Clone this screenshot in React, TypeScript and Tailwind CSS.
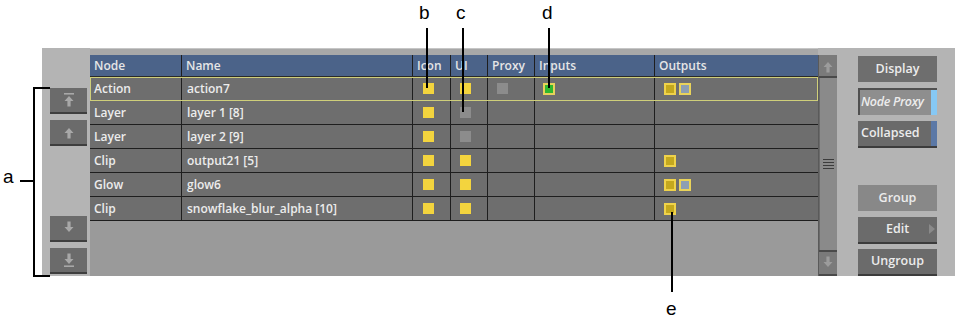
import React from "react";

const F = { fontFamily: '"Liberation Sans", Arial, sans-serif' };
const UIF = { fontFamily: '"Open Sans", "Liberation Sans", sans-serif' };

type Row = {
  node: string;
  name: string;
  icon: boolean;
  ui: "y" | "g";
  proxy?: boolean;
  input?: boolean;
  outputs: ("o" | "b")[];
  sel?: boolean;
};

const rows: Row[] = [
  { node: "Action", name: "action7", icon: true, ui: "y", proxy: true, input: true, outputs: ["o", "b"], sel: true },
  { node: "Layer", name: "layer 1 [8]", icon: true, ui: "g", outputs: [] },
  { node: "Layer", name: "layer 2 [9]", icon: true, ui: "g", outputs: [] },
  { node: "Clip", name: "output21 [5]", icon: true, ui: "y", outputs: ["o"] },
  { node: "Glow", name: "glow6", icon: true, ui: "y", outputs: ["o", "b"] },
  { node: "Clip", name: "snowflake_blur_alpha [10]", icon: true, ui: "y", outputs: ["o"] },
];

const Yel = () => <div className="w-[11px] h-[11px] bg-[#f3d43e]" />;
const Gry = () => <div className="w-[11px] h-[11px] bg-[#8c8c8c]" />;
const Out = ({ k }: { k: "o" | "b" }) =>
  k === "o" ? (
    <div className="w-[12px] h-[12px] bg-[#c4a81e] border-2 border-[#efd24a]" />
  ) : (
    <div className="w-[12px] h-[12px] bg-[#8d9fb2] border-2 border-[#e9d35a]" />
  );

const cols = [
  { w: "w-[92px]", label: "Node" },
  { w: "w-[231px]", label: "Name" },
  { w: "w-[38px]", label: "Icon" },
  { w: "w-[37px]", label: "UI" },
  { w: "w-[47px]", label: "Proxy" },
  { w: "w-[120px]", label: "Inputs" },
];

function Arrow({ dir, bar, c = "#a8a8a8" }: { dir: "up" | "down"; bar?: boolean; c?: string }) {
  return (
    <svg width="12" height="16" viewBox="0 0 12 16">
      {dir === "up" ? (
        <g fill={c}>
          {bar && <rect x="1" y="1" width="10" height="1.6" />}
          <polygon points="6,4 10.5,9 7.6,9 7.6,14.5 4.4,14.5 4.4,9 1.5,9" />
        </g>
      ) : (
        <g fill={c}>
          <polygon points="6,12 10.5,7 7.6,7 7.6,1.5 4.4,1.5 4.4,7 1.5,7" />
          {bar && <rect x="1" y="13.4" width="10" height="1.6" />}
        </g>
      )}
    </svg>
  );
}

function LeftBtn({ dir, bar }: { dir: "up" | "down"; bar?: boolean }) {
  return (
    <div className="w-[37px] h-[26px] bg-[#6b6b6b] border-b-2 border-[#3e3e3e] flex items-center justify-center">
      <Arrow dir={dir} bar={bar} />
    </div>
  );
}

function RBtn({
  children,
  className = "",
}: {
  children: React.ReactNode;
  className?: string;
}) {
  return (
    <div
      style={UIF}
      className={
        "w-[79px] h-[26px] flex items-center text-[12.5px] font-semibold text-[#ececec] " + className
      }
    >
      {children}
    </div>
  );
}

export default function App() {
  return (
    <div className="relative w-[959px] h-[321px] bg-white overflow-hidden" style={F}>
      {/* panel */}
      <div className="absolute left-[42px] top-[48px] w-[913px] h-[228px] bg-[#b4b4b4] flex">
        {/* left column */}
        <div className="w-[48px] pl-[8px] pt-[40px] flex flex-col">
          <LeftBtn dir="up" bar />
          <div className="h-[6px]" />
          <LeftBtn dir="up" />
          <div className="h-[70px]" />
          <LeftBtn dir="down" />
          <div className="h-[6px]" />
          <LeftBtn dir="down" bar />
        </div>
        {/* table */}
        <div className="w-[728px] flex flex-col" style={UIF}>
          <div className="h-[7px] bg-[#a8a8a8] border-t border-[#c6c6c6]" />
          <div className="flex-1 bg-[#9a9a9a] flex flex-col">
            {/* header */}
            <div className="flex h-[22px] bg-[#4b6389] border-b border-[#2a2a2a] text-[12px] font-semibold text-[#e6e6e6]">
              {cols.map((c, i) => (
                <div
                  key={i}
                  className={c.w + " h-full flex items-center pl-[4px] border-r border-[#1e1e1e] shrink-0"}
                >
                  {c.label}
                </div>
              ))}
              <div className="flex-1 h-full flex items-center pl-[4px]">Outputs</div>
            </div>
            {rows.map((r, ri) => (
              <div
                key={ri}
                className={
                  "flex h-[24px] bg-[#6e6e6e] text-[12px] font-semibold text-[#ececec] border-b border-[#1e1e1e] " +
                  (r.sel ? "outline outline-1 outline-[#cfcf7a] -outline-offset-1" : "")
                }
              >
                <div className="w-[92px] flex items-center pl-[4px] border-r border-[#1e1e1e] shrink-0">
                  {r.node}
                </div>
                <div className="w-[231px] flex items-center pl-[5px] border-r border-[#1e1e1e] shrink-0">
                  {r.name}
                </div>
                <div className="w-[38px] flex items-center pl-[10px] border-r border-[#1e1e1e] shrink-0">
                  {r.icon && <Yel />}
                </div>
                <div className="w-[37px] flex items-center pl-[9px] border-r border-[#1e1e1e] shrink-0">
                  {r.ui === "y" ? <Yel /> : <Gry />}
                </div>
                <div className="w-[47px] flex items-center pl-[9px] border-r border-[#1e1e1e] shrink-0">
                  {r.proxy && <Gry />}
                </div>
                <div className="w-[120px] flex items-center pl-[8px] border-r border-[#1e1e1e] shrink-0">
                  {r.input && (
                    <div className="w-[12px] h-[12px] bg-[#2fb82f] border-2 border-[#e6d25a]" />
                  )}
                </div>
                <div className="flex-1 flex items-center pl-[9px] gap-[3px]">
                  {r.outputs.map((o, oi) => (
                    <Out key={oi} k={o} />
                  ))}
                </div>
              </div>
            ))}
          </div>
        </div>
        {/* scrollbar */}
        <div className="w-[19px] flex flex-col pt-[7px]">
          <div className="flex-1 bg-[#8a8a8a] flex flex-col border-l border-[#5a5a5a]">
            <div className="h-[23px] bg-[#7a7a7a] border-b-2 border-[#4a4a4a] flex items-center justify-center">
              <Arrow dir="up" c="#9c9c9c" />
            </div>
            <div className="flex-1 flex items-center justify-center border-l border-[#6a6a6a]">
              <div className="flex flex-col gap-[2px]">
                <div className="w-[11px] h-px bg-[#3c3c3c]" />
                <div className="w-[11px] h-px bg-[#3c3c3c]" />
                <div className="w-[11px] h-px bg-[#3c3c3c]" />
                <div className="w-[11px] h-px bg-[#3c3c3c]" />
              </div>
            </div>
            <div className="h-[26px] bg-[#7a7a7a] border-t-2 border-[#4a4a4a] border-b-2 flex items-center justify-center">
              <Arrow dir="down" c="#9c9c9c" />
            </div>
          </div>
        </div>
        {/* right column */}
        <div className="flex-1 pl-[21px] pt-[8px] flex flex-col">
          <RBtn className="h-[24px] bg-[#6e6e6e] justify-center">Display</RBtn>
          <div className="h-[6px]" />
          <RBtn className="h-[27px] bg-[#8e8e8e] border-t-2 border-l-2 border-[#505050] justify-between">
            <span className="italic pl-[1px] tracking-[-0.3px]">Node Proxy</span>
            <span className="w-[6px] h-full bg-[#86c8f4]" />
          </RBtn>
          <div className="h-[6px]" />
          <RBtn className="h-[27px] bg-[#6a6a6a] border-b-2 border-[#3c3c3c] justify-between">
            <span className="pl-[3px]">Collapsed</span>
            <span className="w-[6px] h-full bg-[#5b78a6]" />
          </RBtn>
          <div className="h-[37px]" />
          <RBtn className="h-[26px] bg-[#888888] justify-center">Group</RBtn>
          <div className="h-[6px]" />
          <RBtn className="h-[27px] bg-[#6b6b6b] border-b-2 border-[#3c3c3c] justify-center relative">
            Edit
            <svg className="absolute right-[2px] top-[7px]" width="6" height="10" viewBox="0 0 6 10">
              <polygon points="0,0 6,5 0,10" fill="#8a8a8a" />
            </svg>
          </RBtn>
          <div className="h-[5px]" />
          <RBtn className="h-[27px] bg-[#6b6b6b] border-b-2 border-[#3c3c3c] justify-center">
            Ungroup
          </RBtn>
        </div>
      </div>

      {/* annotations */}
      <div className="absolute left-[3px] top-[167px] text-[19px] leading-none text-black">a</div>
      <div className="absolute left-[20px] top-[180px] w-[14px] h-[2px] bg-black" />
      <div className="absolute left-[33px] top-[87px] w-[2px] h-[190px] bg-black" />
      <div className="absolute left-[33px] top-[87px] w-[17px] h-[2px] bg-black" />
      <div className="absolute left-[33px] top-[275px] w-[17px] h-[2px] bg-black" />

      <div className="absolute left-[419px] top-[3px] text-[19px] leading-none text-black">b</div>
      <div className="absolute left-[426px] top-[28px] w-[2px] h-[60px] bg-black" />
      <div className="absolute left-[456px] top-[3px] text-[19px] leading-none text-black">c</div>
      <div className="absolute left-[462px] top-[28px] w-[2px] h-[84px] bg-black" />
      <div className="absolute left-[542px] top-[3px] text-[19px] leading-none text-black">d</div>
      <div className="absolute left-[548px] top-[28px] w-[2px] h-[60px] bg-black" />
      <div className="absolute left-[671px] top-[212px] w-[2px] h-[80px] bg-black" />
      <div className="absolute left-[666px] top-[299px] text-[19px] leading-none text-black">e</div>
    </div>
  );
}
